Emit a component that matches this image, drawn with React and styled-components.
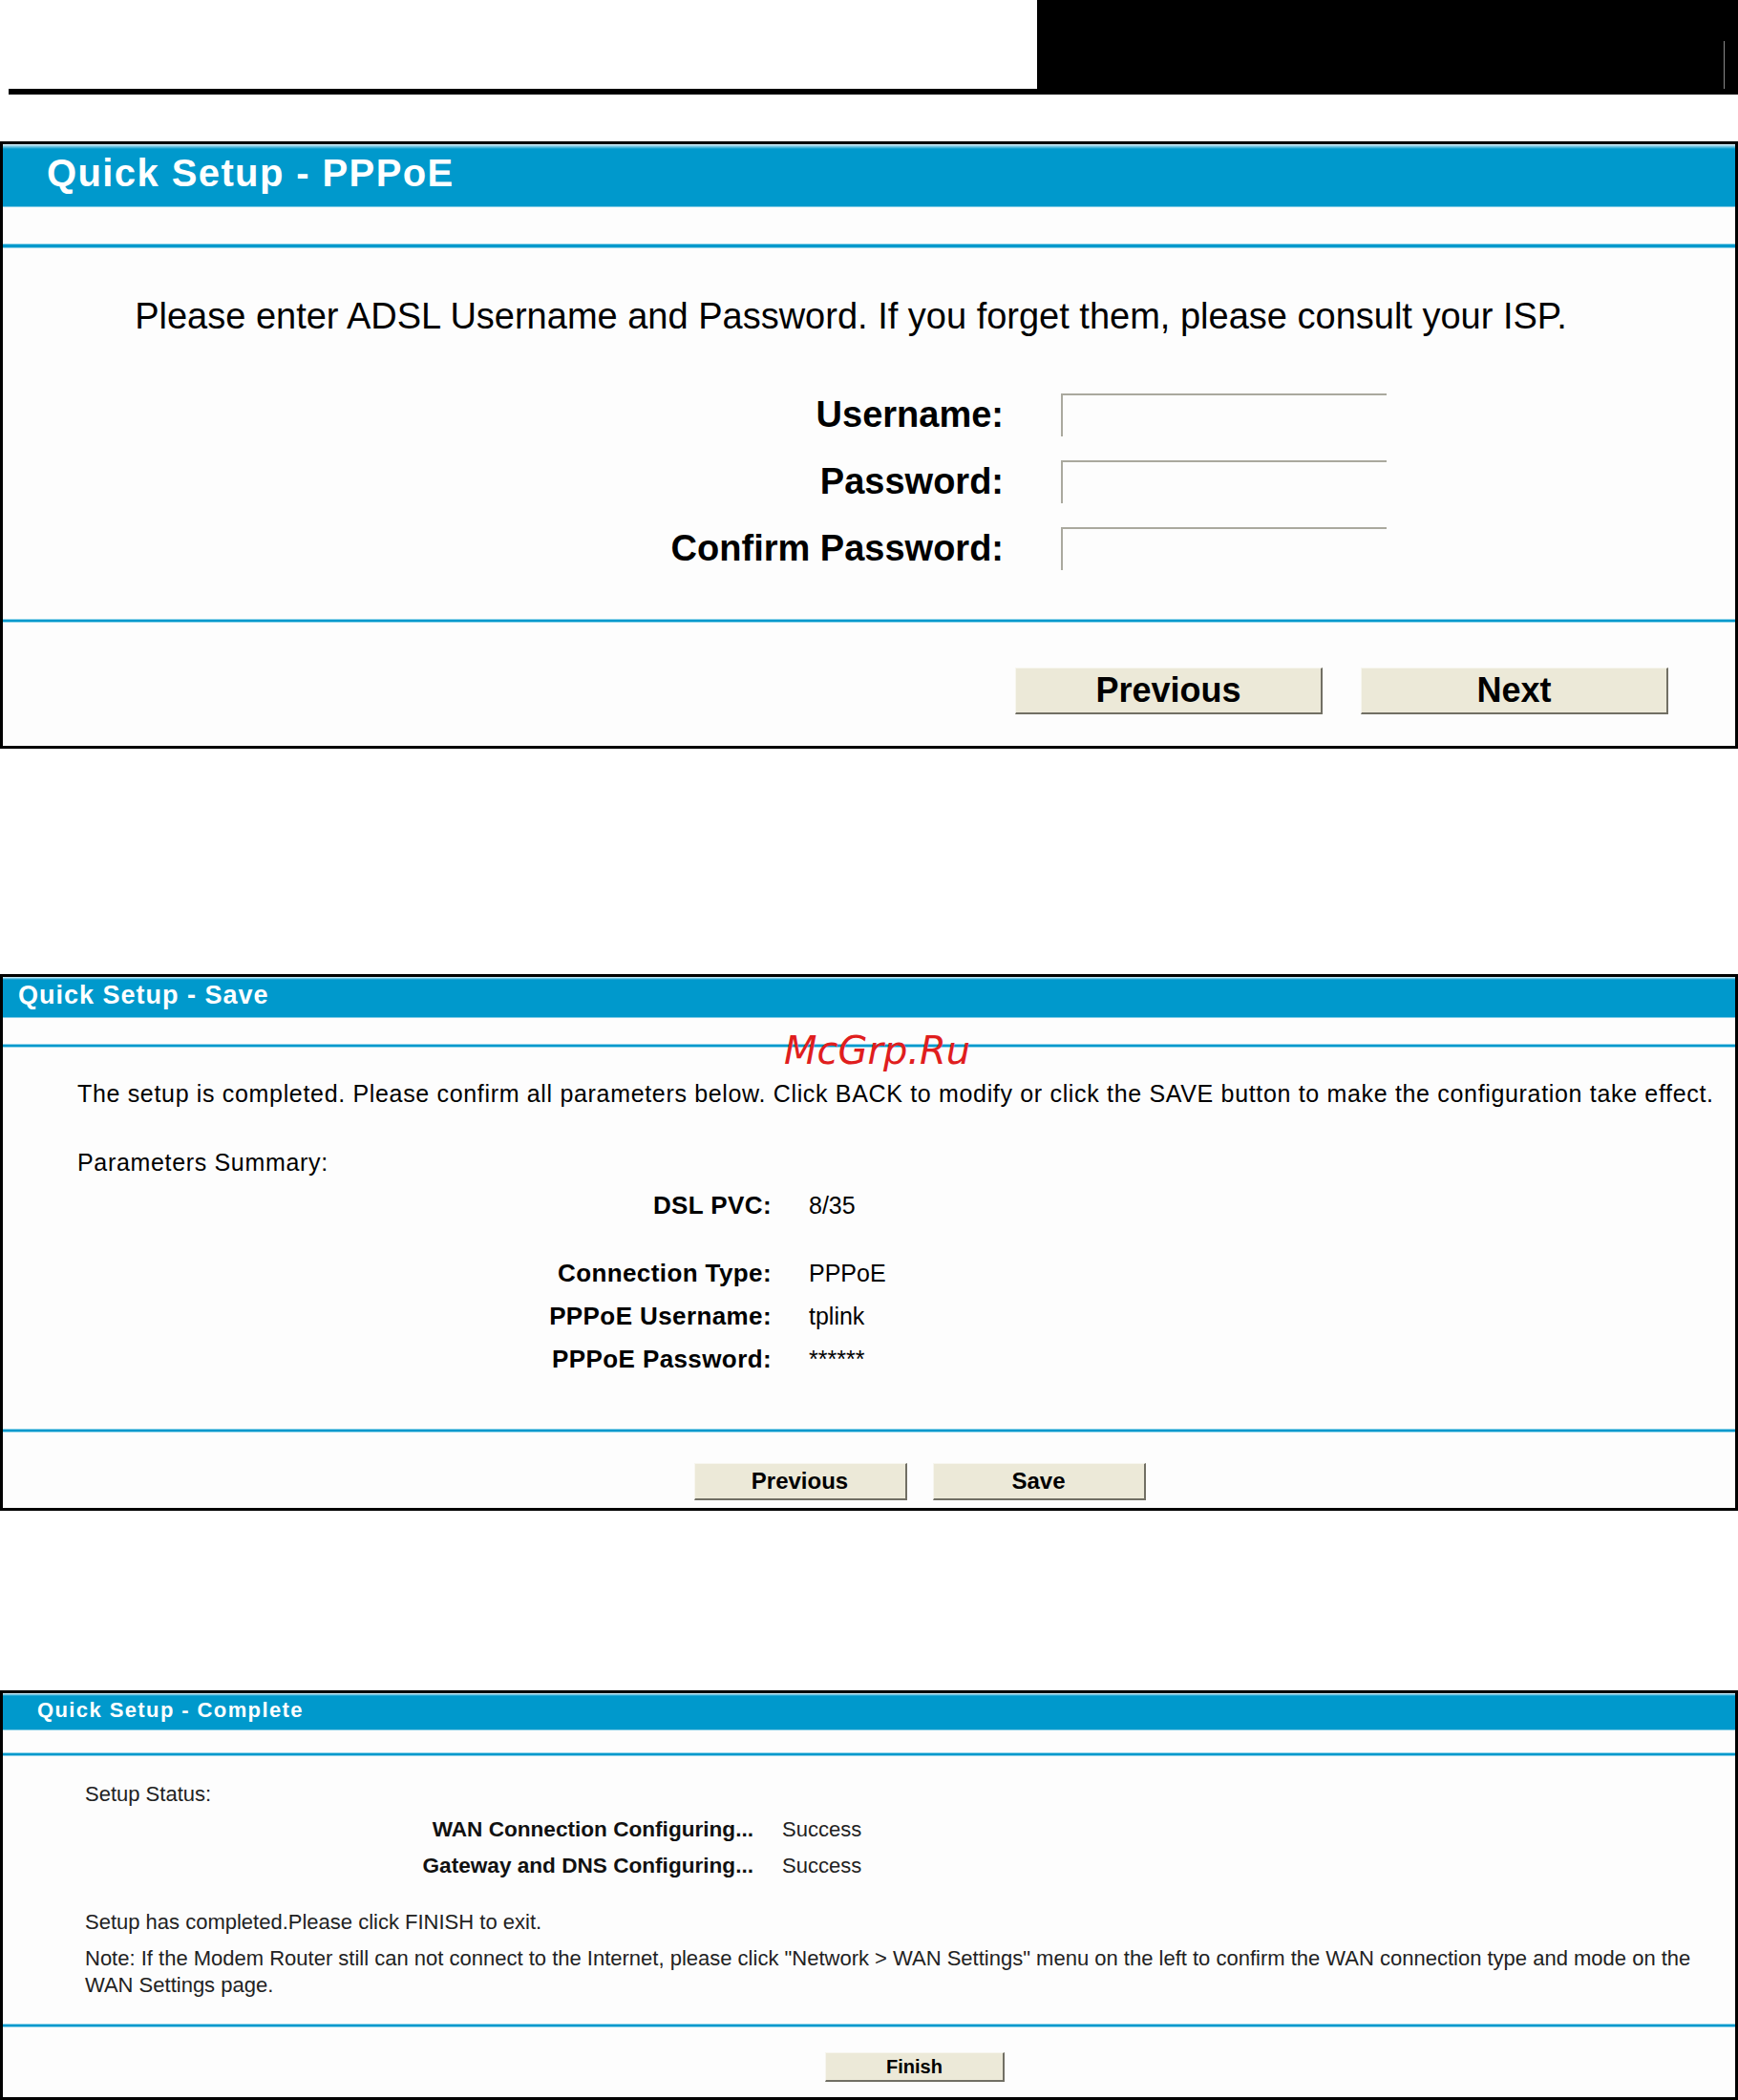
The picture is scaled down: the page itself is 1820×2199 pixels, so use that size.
import React from 'react';
import styled, {createGlobalStyle} from 'styled-components';

const GlobalStyle = createGlobalStyle`
  body {
    margin: 0;
    background: #fff;
    font-family: "Liberation Sans", Arial, sans-serif;
    color: #000;
  }
`

const Page = styled.div`
  width: 1820px;
  display: flex;
  flex-direction: column;
`

const Masthead = styled.div`
  display: flex;
  height: 99px;
`

const MastLine = styled.div`
  flex: 1;
  margin-left: 9px;
  border-bottom: 6px solid #000;
`

const MastBlock = styled.div`
  width: 734px;
  background: #000;
  display: flex;
  justify-content: flex-end;
  align-items: flex-end;
  padding: 0 14px 6px 0;
  box-sizing: border-box;
`

const MastTick = styled.div`
  width: 1px;
  height: 50px;
  background: #8a8a8a;
`

const Panel = styled.section`
  position: relative;
  margin-top: ${p => p.$gap}px;
  border: 3px solid #000;
  background: #fdfdfd;
`

const Header = styled.div`
  height: ${p => p.$h}px;
  box-sizing: border-box;
  background: linear-gradient(#e4f3fa 0, #0099cc ${p => p.$fade}px, #0099cc 100%);
  border-bottom: 1px solid #7fcbe6;
  display: flex;
  align-items: center;
  padding-left: ${p => p.$pl}px;
`

const Title = styled.h2`
  margin: 0 0 ${p => p.$lift}px;
  color: #fff;
  font-size: ${p => p.$size}px;
  letter-spacing: ${p => p.$ls}px;
  font-weight: bold;
  line-height: 1;
`

const Strip = styled.div`
  height: ${p => p.$h}px;
`

const Rule = styled.div`
  height: ${p => p.$h}px;
  box-sizing: border-box;
  background: #0099cc;
  border-top: 1px solid #8fd3ea;
  border-bottom: 1px solid #8fd3ea;
`

const Body = styled.div`
  height: ${p => p.$h}px;
  box-sizing: border-box;
  padding: ${p => p.$pt}px 0 0 ${p => p.$pl || 0}px;
`

const Lead = styled.p`
  margin: 0;
  font-size: 38px;
  line-height: 40px;
  text-align: center;
  padding-right: 38px;
`

const FormGrid = styled.div`
  margin-top: 61px;
  display: grid;
  grid-template-columns: 1048px 341px;
  column-gap: 60px;
  row-gap: 25px;
  align-items: center;
`

const FieldLabel = styled.label`
  font-size: 38px;
  font-weight: bold;
  text-align: right;
  line-height: 45px;
`

const TextBox = styled.input`
  height: 45px;
  width: 341px;
  box-sizing: border-box;
  border: none;
  border-top: 2px solid #aaa99e;
  border-left: 2px solid #aaa99e;
  background: transparent;
  outline: none;
`

const Line = styled.p`
  margin: ${p => p.$mt || 0}px 0 0;
  font-size: ${p => p.$size}px;
  line-height: ${p => p.$lh}px;
  letter-spacing: ${p => p.$ls || 0}px;
  color: ${p => p.$color || '#000'};
`

const InfoGrid = styled.div`
  margin-top: ${p => p.$mt}px;
  display: grid;
  grid-template-columns: ${p => p.$col}px auto;
  column-gap: ${p => p.$gap}px;
  row-gap: ${p => p.$rg}px;
  align-items: center;
  line-height: ${p => p.$rh}px;
`

const InfoLabel = styled.div`
  font-size: ${p => p.$size}px;
  font-weight: bold;
  text-align: right;
  letter-spacing: ${p => p.$ls || 0}px;
  color: ${p => p.$color || '#000'};
`

const InfoValue = styled.div`
  font-size: ${p => p.$size}px;
  color: ${p => p.$color || '#000'};
`

const Spacer = styled.div`
  grid-column: 1 / -1;
  height: ${p => p.$h}px;
`

const ButtonBar = styled.div`
  height: ${p => p.$h}px;
  box-sizing: border-box;
  display: flex;
  justify-content: ${p => p.$justify};
  align-items: flex-start;
  gap: ${p => p.$gap || 0}px;
  padding: ${p => p.$pt}px ${p => p.$pr || 0}px 0 ${p => p.$pl || 0}px;
`

const Button = styled.button`
  width: ${p => p.$w}px;
  height: ${p => p.$h}px;
  box-sizing: border-box;
  background: #ece9d8;
  border: none;
  border-top: 1px solid #f7f6ef;
  border-left: 1px solid #f7f6ef;
  border-right: 2px solid #716f64;
  border-bottom: 2px solid #716f64;
  font-family: "Liberation Sans", Arial, sans-serif;
  font-size: ${p => p.$size}px;
  font-weight: bold;
  color: #000;
  padding: 0;
`

const Watermark = styled.span`
  position: absolute;
  left: 818px;
  top: 57px;
  font-family: "DejaVu Sans", sans-serif;
  font-style: italic;
  font-size: 40px;
  line-height: 1;
  color: #e01e1e;
`

const summary = [
  ['DSL PVC:', '8/35'],
  null,
  ['Connection Type:', 'PPPoE'],
  ['PPPoE Username:', 'tplink'],
  ['PPPoE Password:', '******'],
];

const status = [
  ['WAN Connection Configuring...', 'Success'],
  ['Gateway and DNS Configuring...', 'Success'],
];

export default function App() {
  return (
    <Page>
      <GlobalStyle/>
      <Masthead>
        <MastLine/>
        <MastBlock><MastTick/></MastBlock>
      </Masthead>

      <Panel $gap={49}>
        <Header $h={66} $pl={46} $fade={5}>
          <Title $size={40} $ls={1.4} $lift={6}>Quick Setup - PPPoE</Title>
        </Header>
        <Strip $h={38}/>
        <Rule $h={5}/>
        <Body $h={388} $pt={51}>
          <Lead>Please enter ADSL Username and Password. If you forget them, please consult your ISP.</Lead>
          <FormGrid>
            <FieldLabel>Username:</FieldLabel>
            <TextBox type="text"/>
            <FieldLabel>Password:</FieldLabel>
            <TextBox type="password"/>
            <FieldLabel>Confirm Password:</FieldLabel>
            <TextBox type="password"/>
          </FormGrid>
        </Body>
        <Rule $h={4}/>
        <ButtonBar $h={129} $pt={47} $pr={70} $gap={40} $justify="flex-end">
          <Button $w={322} $h={49} $size={36}>Previous</Button>
          <Button $w={322} $h={49} $size={36}>Next</Button>
        </ButtonBar>
      </Panel>

      <Panel $gap={236}>
        <Header $h={43} $pl={16} $fade={3}>
          <Title $size={27} $ls={1} $lift={3}>Quick Setup - Save</Title>
        </Header>
        <Strip $h={27}/>
        <Rule $h={4}/>
        <Body $h={399} $pt={34} $pl={78}>
          <Line $size={25} $lh={28} $ls={0.67}>The setup is completed. Please confirm all parameters below. Click BACK to modify or click the SAVE button to make the configuration take effect.</Line>
          <Line $size={25} $lh={28} $ls={0.67} $mt={44}>Parameters Summary:</Line>
          <InfoGrid $mt={15} $col={727} $gap={39} $rh={32} $rg={13}>
            {summary.map((row, i) => row ? (
              <React.Fragment key={i}>
                <InfoLabel $size={26} $ls={0.4}>{row[0]}</InfoLabel>
                <InfoValue $size={25}>{row[1]}</InfoValue>
              </React.Fragment>
            ) : <Spacer key={i} $h={13}/>)}
          </InfoGrid>
        </Body>
        <Rule $h={4}/>
        <ButtonBar $h={79} $pt={32} $pl={106} $gap={27} $justify="center">
          <Button $w={223} $h={39} $size={24}>Previous</Button>
          <Button $w={223} $h={39} $size={24}>Save</Button>
        </ButtonBar>
        <Watermark>McGrp.Ru</Watermark>
      </Panel>

      <Panel $gap={188}>
        <Header $h={39} $pl={36} $fade={3}>
          <Title $size={22} $ls={1.4} $lift={2}>Quick Setup - Complete</Title>
        </Header>
        <Strip $h={23}/>
        <Rule $h={4}/>
        <Body $h={280} $pt={27} $pl={86}>
          <Line $size={22} $lh={26} $color="#222">Setup Status:</Line>
          <InfoGrid $mt={11} $col={700} $gap={30} $rh={26} $rg={12}>
            {status.map(row => (
              <React.Fragment key={row[0]}>
                <InfoLabel $size={22.6} $color="#111">{row[0]}</InfoLabel>
                <InfoValue $size={22} $color="#222">{row[1]}</InfoValue>
              </React.Fragment>
            ))}
          </InfoGrid>
          <Line $size={22} $lh={26} $mt={33} $color="#222">Setup has completed.Please click FINISH to exit.</Line>
          <Line $size={22} $lh={28} $mt={11} $color="#222">
            Note: If the Modem Router still can not connect to the Internet, please click "Network &gt; WAN Settings" menu on the left to confirm the WAN connection type and mode on the<br/>
            WAN Settings page.
          </Line>
        </Body>
        <Rule $h={4}/>
        <ButtonBar $h={73} $pt={26} $pl={96} $justify="center">
          <Button $w={188} $h={31} $size={20}>Finish</Button>
        </ButtonBar>
      </Panel>
    </Page>
  );
}
